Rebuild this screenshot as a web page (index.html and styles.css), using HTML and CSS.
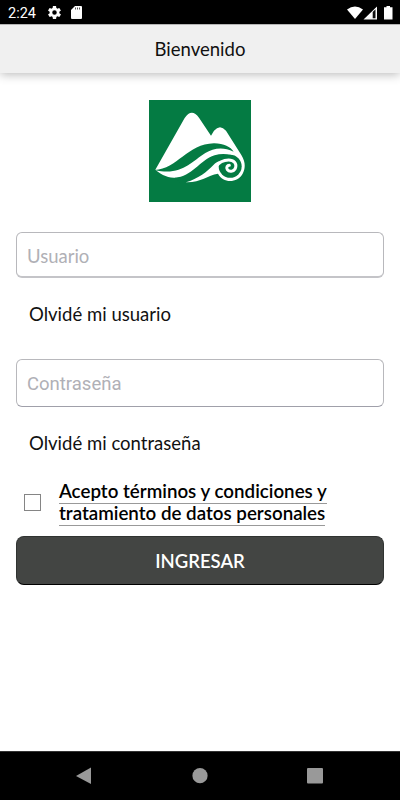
FILE: index.html
```html
<!DOCTYPE html>
<html lang="es">
<head>
<meta charset="utf-8">
<title>Bienvenido</title>
<link rel="stylesheet" href="styles.css">
</head>
<body>
<div class="status">
  <span class="time">2:24</span>
  <svg class="gear" viewBox="2 2 20 20" width="13" height="13"><path fill="#fff" fill-rule="evenodd" d="M19.4 13a7.700 7.700 0 0 0 0-2l2.100-1.600c.2-.2.3-.4.1-.7l-2-3.400c-.1-.2-.4-.3-.6-.2l-2.500 1a7.300 7.300 0 0 0-1.700-1L14.500 2.400a.5.5 0 0 0-.5-.4h-4a.5.5 0 0 0-.5.400L9.100 5.100a8 8 0 0 0-1.700 1l-2.500-1c-.2-.1-.5 0-.6.200l-2 3.400c-.1.200-.1.500.1.700L4.600 11a7.700 7.700 0 0 0 0 2l-2.200 1.600c-.2.200-.2.400-.1.700l2 3.400c.1.200.4.300.6.200l2.500-1a7.300 7.300 0 0 0 1.700 1l.4 2.700c0 .2.200.4.500.4h4c.2 0 .5-.2.500-.4l.4-2.700a8 8 0 0 0 1.700-1l2.500 1c.2.100.5 0 .6-.2l2-3.400c.1-.2.100-.5-.1-.7zM12 15.500a3.500 3.500 0 1 1 0-7 3.500 3.500 0 0 1 0 7z"/></svg>
  <svg class="card" viewBox="0 0 11 13" width="11" height="13"><path fill="#fff" d="M4 0h6q1 0 1 1v11q0 1-1 1H1q-1 0-1-1V4z"/><path stroke="#555" d="M4.500 1.500v2M6.500 1.500v2M8.500 1.500v2"/></svg>
  <svg class="signals" viewBox="0 0 46 14" width="46" height="14"><path fill="#fff" d="M0 3.500Q8-2.500 16 3.500L8 13z"/><path fill="#fff" d="M16.500 13.500L30 .5v13z"/><path fill="#111" d="M25.700 6l2.800-2.700v9h-2.800z"/><path fill="#fff" d="M39.500 0H43v1.300h2.500v12.200h-8.500V1.300h2.500z"/></svg>
</div>
<header class="bar">Bienvenido</header>
<main>
  <svg class="logo" viewBox="15 15 306 306" width="102" height="102">
    <path fill="#047b43" d="M15 15h306v306H15z"/>
    <path fill="#fff" d="M34 224L122 69Q143 38 165 68L201 122L210 107Q228 86 246 107L292 180C307 204 303 224 296 236C280 264 238 266 222 236C190 241 170 263 127 262C115 257 110 245 120 247C85 252 60 246 34 224z"/>
    <path fill="#047b43" d="M32 225C100 222 130 147 210 145C240 145 260 156 269 170C235 154 207 161 184 174C140 202 110 244 32 225z"/>
    <path fill="#047b43" d="M92 248C145 246 166 196 212 181Q236 173 262 180L262 195C235 192 222 198 209 209C187 231 166 249 126 262L108 262z"/>
    <circle fill="#047b43" cx="258.500" cy="214" r="34.500"/>
    <path fill="none" stroke="#fff" stroke-width="9" stroke-linecap="round" d="M216 216C224 203 239 195 254 195C270 195 278 206 275 217C272 229 257 233 250 224C246 216 250 211 256 211"/>
  </svg>
  <input class="field user" type="text" placeholder="Usuario">
  <a class="forgot first">Olvidé mi usuario</a>
  <input class="field pass" type="password" placeholder="Contraseña">
  <a class="forgot second">Olvidé mi contraseña</a>
  <div class="terms"><span class="check"></span><a class="copy"><span>Acepto términos y condiciones y</span><br><span>tratamiento de datos personales</span></a></div>
  <button class="submit">INGRESAR</button>
</main>
<nav class="nav">
  <svg viewBox="0 0 400 48" width="400" height="48"><g fill="#999"><path d="M76 24L91 15.500v16.500z"/><circle cx="200" cy="23.700" r="7.600"/><rect x="307" y="16" width="16" height="15.500" rx="1"/></g></svg>
</nav>
</body>
</html>
```
FILE: styles.css
```css
* { box-sizing: border-box; }
body { margin: 0; width: 400px; height: 800px; display: flex; flex-direction: column; background: #fff; color: #111; font-family: Lato, sans-serif; font-size: 18.550px; overflow: hidden; }
.status { height: 24px; flex: none; background: #000; color: #fff; display: flex; align-items: center; padding: 1px 7px 0 8px; font: 14.500px Roboto, sans-serif; }
.time { width: 40px; padding-top: 1px; }
.card { margin-left: 10px; }
.signals { margin-left: auto; }
.bar { height: 49px; flex: none; background: #f0f0f0; border-top: 1px solid #b5b5b5; text-align: center; line-height: 49px; box-shadow: 0 1px 10px rgba(0,0,0,.3); }
main { flex: 1; display: flex; flex-direction: column; padding: 27px 16px 0; }
.logo { align-self: center; flex: none; }
.field { width: 368px; border: 1px solid #b8b8bc; border-bottom: 2px solid #c4c4c8; border-radius: 6px; padding: 2px 10px 0; background: #fff; font: 18.500px Lato, sans-serif; outline: none; }
.field::placeholder { color: #b0b0b6; opacity: 1; }
.user { height: 46px; margin-top: 30px; }
.pass { height: 48px; margin-top: 34px; font-family: Roboto, sans-serif; border-bottom: 1px solid #a0a0aa; }
.forgot { margin-left: 13px; line-height: 22px; }
.first { margin-top: 25px; }
.second { margin-top: 25px; }
.terms { display: flex; align-items: center; height: 44px; margin-top: 26px; padding-left: 8px; }
.check { width: 17px; height: 17px; border: 1px solid #858585; margin-right: 18px; }
.copy { font-size: 18.750px; font-weight: 600; line-height: 22px; white-space: nowrap; color: #000; }
.copy span { border-bottom: 1px solid #999; padding-bottom: 1px; }
.submit { height: 49px; flex: none; margin-top: 12px; border: 1px solid #303331; border-bottom-color: #000; border-radius: 8px; background: #434543; color: #fff; font: 600 18.500px Lato, sans-serif; padding: 0; }
.nav { height: 49px; flex: none; background: #000; border-top: 1px solid #333; }
.nav svg { display: block; }
```
